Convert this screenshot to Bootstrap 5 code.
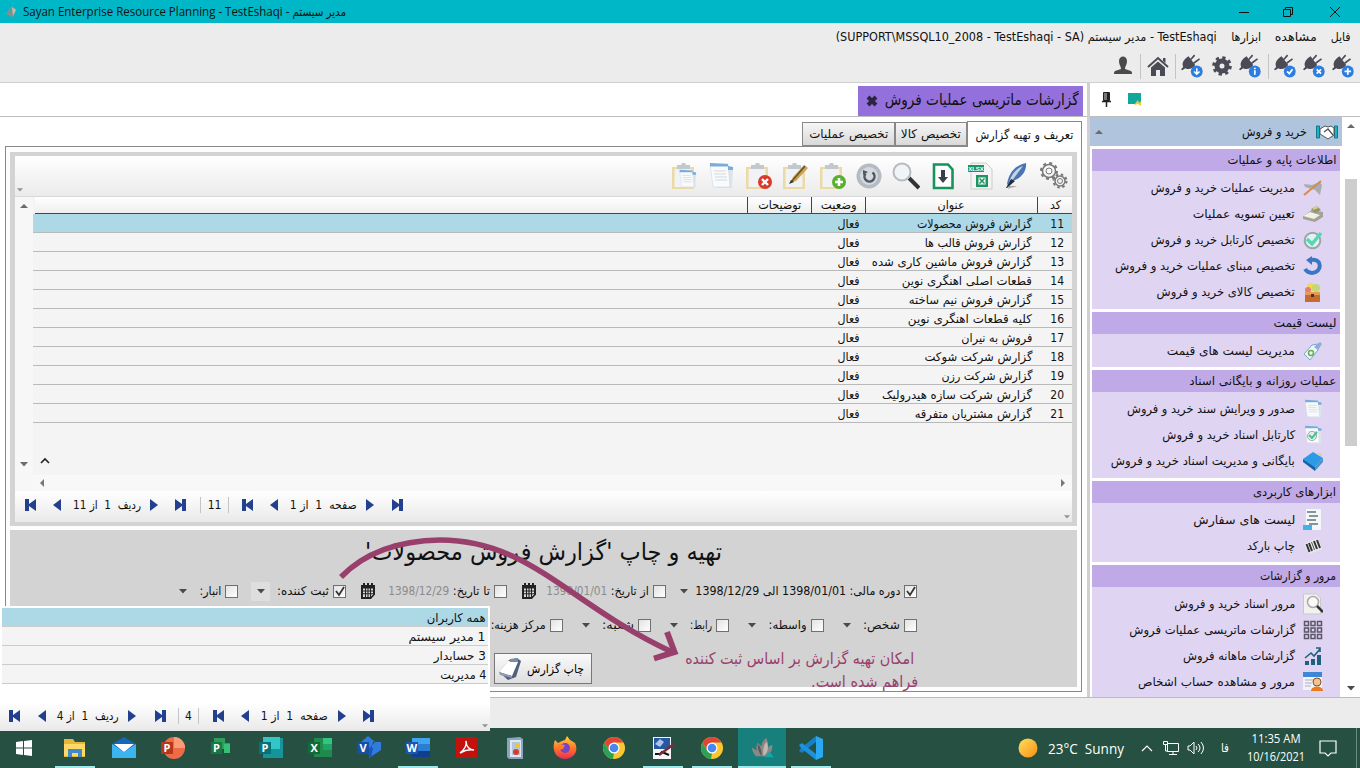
<!DOCTYPE html>
<html lang="fa">
<head>
<meta charset="utf-8">
<title>Sayan Enterprise Resource Planning</title>
<link rel="stylesheet" href="https://cdn.jsdelivr.net/npm/bootstrap@5.3.0/dist/css/bootstrap.min.css">
<style>
body{width:1360px;height:768px;overflow:hidden;font:12px/16px "DejaVu Sans Condensed","DejaVu Sans",sans-serif;color:#111;background:#ececec}
svg{display:block;flex:none}
[data-w]{display:inline-block;white-space:nowrap;flex:none}
.titlebar{height:23px;background:#00b7c7;font-family:"Open Sans","DejaVu Sans Condensed",sans-serif;padding:0 19px 0 4px}
.topmenu{height:60px;background:#ececec;border-bottom:1px solid #cfcfcf}
.menurow{height:28px;padding:0 9px;gap:14px}
.toolrow{height:30px;padding-right:4px;gap:5px}
.vsep{width:1px;height:25px;background:#c4c4c4}
.workarea{height:614px;background:#fff}
.leftpane{width:1087px}
.splitter{width:3px;background:#d0d0d0}
.pagetabs{height:34px;border-bottom:1px solid #bdbdbd;padding:3px 4px 0 0}
.pagetab{width:225px;height:30px;background:#9370db;padding:0 4px 3px;gap:7px}
.innertabs{height:29px;padding:4px 5px 0 0}
.itab{height:24px;border:1px solid #888;background:linear-gradient(#f6f6f6,#d9d9d9)}
.itab.on{height:26px;background:#fff;border-bottom:0;position:relative;margin-bottom:-1px;z-index:1}
.frame{margin-left:5px;width:1077px;height:546px;border:1px solid #888;background:#fdfdfd;padding:5px 4px}
.gridbox{height:374px;border:4px solid #d3d3d3;border-width:4px 5px}
.gtools{height:41px;background:linear-gradient(#fff,#ebebeb);border-bottom:1px solid #d8d8d8;padding:6px 4px 0 0;gap:9px;position:relative}
.gcol{width:18px;background:#f7f7f7;padding:6px 0 8px}
.gmain{background:#f4f4f4}
.grow,.ghead{display:grid;grid-template-columns:35px 172px 54px 64px 1fr;height:19px;border-bottom:1px solid #b9b9b9;align-items:center}
.grow>*{padding:2px 5px 0 0}
.grow>:first-child{padding-right:8px}
.grow.on,.prow.on{background:#add8e6}
.ghead{height:17px;margin-left:2px;background:linear-gradient(#fff,#eee);border-color:#3a4a55}
.ghead>*{text-align:center;height:16px;border-left:1px solid #444}
.ghead>:last-child{border:0}
.hscroll{height:16px;background:#f8f8f8;padding:0 6px}
.pager{display:grid;align-items:center;justify-items:center;background:linear-gradient(#fff,#e9e9e9);position:relative;color:#111;padding-bottom:3px}
.pager-main{height:31px;grid-template-columns:32px 20px 80px 13px 40px 29px 37px 16px 83px 9px 45px}
.pager-pop{height:28px;grid-template-columns:30px 24px 68px 20px 36px 21px 40px 12px 87px 7px 46px}
.pcount{justify-self:stretch;text-align:center;border:solid #c4c4c4;border-width:0 1px}
.cornr{position:absolute;left:2px;bottom:4px;opacity:.55}
.cornr.r{left:auto;right:2px;bottom:3px}
.printbox{height:157px;margin-top:4px;background:#d3d3d3;position:relative}
.ptitle{font-size:24px;line-height:44px;height:44px}
.frow{height:34px;padding-right:160px}
.field{gap:4px;height:20px}
.ck{width:13px;height:13px;border:1px solid #707070;background:linear-gradient(135deg,#e2e2e2,#fff);flex:none}
.frow .tail{margin-right:auto;margin-left:14px}
.frow.two .tail{margin-left:19px}
.frow .tail.pick{width:19px;height:19px;background:#dedede;margin-left:13px}
.muted-date{color:#8b8b8b}
.printbtn{width:98px;height:31px;margin-right:485px;margin-top:11px;border:1px solid #777;background:linear-gradient(#fafafa,#dedede);padding:0 7px 0 2px;border-radius:0}
.note{position:absolute;color:#993f6b;font-size:16px;line-height:23px;left:660px;top:117px;width:248px}
.arrowline{position:absolute;left:320px;top:0;pointer-events:none}
.popup{position:absolute;left:0;top:606px;width:490px;height:125px;background:#fff;padding-top:2px}
.prow{height:19px;margin:0 2px;padding:1px 2px 0;background:#f4f4f4;border-bottom:1px solid #ccc;line-height:19px}
.side{width:270px}
.sidetop{height:34px;border-bottom:1px solid #bdbdbd;padding:0 0 0 9px;gap:14px}
.sidelist{width:252px}
.modhead{height:29px;background:#b0c4de;padding:0 3px 0 5px;margin-bottom:3px}
.grp{margin:0 2px 3px;background:#dfd5f3;padding-bottom:3.5px}
.grp h6{margin:0 0 4px;height:22px;background:#bfaae7;font-size:12px;line-height:22px;padding-right:4px;font-weight:400}
.grp a{height:26px;color:#111;text-decoration:none;padding-right:17px;gap:8px}
.sbar{width:18px;padding:6px 0}
.thumb{width:12px;height:267px;margin:51px auto 0;background:#cdcdcd}
.botbar{height:31px;border-top:1px solid #bbb}
.taskbar{height:40px;background:#265042;color:#fff;font-family:"Open Sans","DejaVu Sans",sans-serif}
.ti{height:40px;width:40px;margin-right:9px}
.ti.run{box-shadow:inset 0 -2px #9fe8ea}
.ti.act{background:#17807c;width:48px;margin-left:-3px;margin-right:5px}
</style>
</head>
<body>
<svg width="0" height="0" class="position-absolute"><defs>
<linearGradient id="gSun" x2="1" y2="1"><stop stop-color="#ffe25a"/><stop offset="1" stop-color="#f98d12"/></linearGradient>
<linearGradient id="gFox" x2="0" y2="1"><stop stop-color="#ffd43a"/><stop offset=".6" stop-color="#ff6a2a"/><stop offset="1" stop-color="#e82a5c"/></linearGradient>
<symbol id="plug" viewBox="0 0 20 22"><path fill="#4b4b55" d="M2 12C0 7 4 4 7 2l6 8c-2 3-6 5-9 3l-3 2-1-1z"/><path d="M9 5l3.500-4M11.500 8.500L17 4.500" stroke="#4b4b55" stroke-width="1.500"/><circle cx="14.500" cy="16" r="5.500" fill="#2a7de1"/></symbol>
<symbol id="tup" viewBox="0 0 8 5"><path d="M0 5l4-4 4 4z" fill="#6b6b6b"/></symbol>
<symbol id="tdn" viewBox="0 0 8 5"><path d="M0 0h8L4 4.500z" fill="#4a4a4a"/></symbol>
<symbol id="nf" viewBox="0 0 12 12"><path fill="#23408f" d="M0 0h4v5l7-5v12l-7-5v5H0z"/></symbol>
<symbol id="np" viewBox="0 0 8 12"><path fill="#23408f" d="M8 0v12L0 6z"/></symbol>
<symbol id="clip" viewBox="0 0 28 28"><path d="M2 5h22v22H2z" fill="#ecd9a4"/><path d="M4.500 7h17v18h-17z" fill="#f0f2f5"/><path d="M7 3h4l1-2h3l1 2h4v4H7z" fill="#c3c8cd"/></symbol>
<symbol id="doc" viewBox="0 0 28 28"><path d="M6 3l20 2-1 21H10z" fill="#dce4eb"/><path d="M3 2h18l2 23H6z" fill="#f8fafb" stroke="#cfd6dc" stroke-width=".6"/><path d="M3 1l18 1v2.500H3zM21 4l5 1v3h-5z" fill="#7babdb"/><path d="M7 9h12M7 12h12M8 15h12M8 18h12" stroke="#d3d8dd"/></symbol>
<symbol id="cal" viewBox="0 0 16 16"><path d="M1 2h14v9.500L11 16H1z" fill="#222"/><path d="M3 5.500h10v6L10.500 14H3z" fill="#ddd"/><path d="M3 8h10M3 10.800h10M5.500 5v9M8 5v9M10.500 5v9" stroke="#222" stroke-width="1.100"/><path d="M4 0v3M8 0v3M12 0v3" stroke="#222" stroke-width="2"/></symbol>
<symbol id="chrome" viewBox="0 0 24 24"><circle cx="12" cy="12" r="11" fill="#fbc72e"/><path d="M2.500 6.500A11 11 0 0 1 21.500 6.500H12L7 14z" fill="#e0453a"/><path d="M2.500 6.500L7.500 15 12 17 11 23A11 11 0 0 1 2.500 6.500z" fill="#2ea150"/><circle cx="12" cy="12" r="5.500" fill="#fff"/><circle cx="12" cy="12" r="4.300" fill="#4787f0"/></symbol>
<symbol id="flower" viewBox="0 0 24 24"><path d="M5 20C2 17 1 13 1 11l5 3c-1-3 0-6 1-8l4 4c0-4 2-7 5-9 2 4 2 7 1 10l5-3c1 4-1 9-5 12z" fill="#8d8784"/><path d="M11 20c-3-4-4-8-4-13 3 3 4 7 4 13z" fill="#5d5856"/><path d="M13 20c-1-6 0-11 3-15 3 5 2 11-3 15z" fill="#c0b9b4"/><path d="M14 21l5-6 5 6z" fill="#14a5ad"/></symbol>
</defs></svg>

<header class="titlebar d-flex align-items-center">
  <svg width="14" height="14" viewBox="0 0 14 14"><path d="M2 9l4-6v8zM7 1l5 3-3 8-3-1z" fill="#8f8b89"/><path d="M8 2l4 3-3 6z" fill="#c9b9ae"/></svg>
  <span dir="ltr" data-w="323" style="margin-left:5px">Sayan Enterprise Resource Planning - TestEshaqi - مدیر سیستم</span>
  <svg class="ms-auto" width="106" height="12" fill="none" stroke="#111"><path d="M4 6.500h10M48.500 3.500h7v7h-7zM50.500 3V1.500h7v7H56M95 1l10 10M105 1L95 11"/></svg>
</header>

<div class="topmenu">
  <nav class="menurow d-flex align-items-center" dir="rtl">
    <span data-w="20">فایل</span><span data-w="42">مشاهده</span><span data-w="30">ابزارها</span>
    <span dir="ltr" data-w="381">(SUPPORT\MSSQL10_2008 - TestEshaqi - SA) مدیر سیستم - TestEshaqi</span>
  </nav>
  <div class="toolrow d-flex align-items-center" dir="rtl">
    <svg width="24" height="24" viewBox="0 0 22 22"><use href="#plug" width="20" height="22"/><path d="M14.500 13v6M11.500 16h6" stroke="#fff" stroke-width="1.600"/></svg>
    <svg width="24" height="24" viewBox="0 0 22 22"><use href="#plug" width="20" height="22"/><path d="M12.500 14l4 4M16.500 14l-4 4" stroke="#fff" stroke-width="1.600"/></svg>
    <svg width="24" height="24" viewBox="0 0 22 22"><use href="#plug" width="20" height="22"/><path d="M12 16l2 2 3-4" stroke="#fff" stroke-width="1.600" fill="none"/></svg>
    <i class="vsep"></i>
    <svg width="24" height="24" viewBox="0 0 22 22"><use href="#plug" width="20" height="22"/><path d="M14.500 12.500v1.500M14.500 15v4" stroke="#fff" stroke-width="1.600"/></svg>
    <svg width="24" height="24" viewBox="-12 -12 24 24"><circle r="5" fill="none" stroke="#4b4b55" stroke-width="5"/><circle r="8.300" fill="none" stroke="#4b4b55" stroke-width="3" stroke-dasharray="3.260 3.259"/></svg>
    <svg width="24" height="24" viewBox="0 0 22 22"><use href="#plug" width="20" height="22"/><path d="M14.500 13v5M12 16l2.500 2.500L17 16" stroke="#fff" stroke-width="1.400" fill="none"/></svg>
    <i class="vsep"></i>
    <svg width="24" height="24" viewBox="0 0 24 24"><path d="M2 13L12 4l10 9" fill="none" stroke="#4b4b55" stroke-width="2"/><path d="M5 13.500L12 7.500l7 6V22h-5v-6h-4v6H5z" fill="#4b4b55"/><path d="M17 4h2.500v5L17 7z" fill="#4b4b55"/></svg>
    <i class="vsep"></i>
    <svg width="24" height="24" viewBox="0 0 24 24"><path fill="#4a4a4a" d="M8 7c0-6 8-6 8 0 0 4-2 5-2 8l6 2c1 1 1 2 1 3H3c0-1 0-2 1-3l6-2c0-3-2-4-2-8z"/></svg>
  </div>
</div>

<main class="workarea d-flex">
  <section class="leftpane">
    <div class="pagetabs" dir="rtl"><div class="pagetab d-flex align-items-center fs-6"><span data-w="194">گزارشات ماتریسی عملیات فروش</span><svg width="12" height="12" viewBox="0 0 12 12" style="margin-top:3px"><path d="M2 2l8 8M10 2l-8 8" stroke="#2c2540" stroke-width="4"/></svg></div></div>
    <div class="innertabs d-flex align-items-end" dir="rtl">
      <div class="itab on d-flex align-items-center justify-content-center" style="width:115px"><span data-w="98">تعریف و تهیه گزارش</span></div>
      <div class="itab d-flex align-items-center justify-content-center" style="width:72px"><span data-w="60">تخصیص کالا</span></div>
      <div class="itab d-flex align-items-center justify-content-center" style="width:93px"><span data-w="79">تخصیص عملیات</span></div>
    </div>
    <div class="frame">
      <div class="gridbox d-flex flex-column">
        <div class="gtools d-flex" dir="rtl">
          <svg width="28" height="28" viewBox="0 0 28 28" fill="none" stroke="#777"><circle cx="9" cy="9" r="3"/><circle cx="9" cy="9" r="6.500" stroke-width="1.500"/><circle cx="9" cy="9" r="8" stroke-width="2" stroke-dasharray="3 3.280"/><circle cx="20" cy="19" r="2.500"/><circle cx="20" cy="19" r="5" stroke-width="1.500"/><circle cx="20" cy="19" r="6.500" stroke-width="2" stroke-dasharray="2.500 2.600"/></svg>
          <svg width="28" height="28" viewBox="0 0 28 28"><path d="M5 27c3-2 6-1 9-3l-8 0z" fill="#aaa"/><path d="M4 23C5 12 12 3 23 1c1 8-5 16-14 18z" fill="#4a74b4"/><path d="M5 24L20 4c-8 3-13 10-15 20z" fill="#c4d3e8"/><path d="M3 26l5-9 4 2-8 7z" fill="#222a3c"/></svg>
          <svg width="28" height="28" viewBox="0 0 28 28"><path d="M5 1h15l6 6v20H5z" fill="#f4f4f4" stroke="#ccc"/><path d="M2 3h16v7H2z" fill="#1e9463"/><text x="10" y="8.700" font-size="6" font-family="Liberation Sans" font-weight="700" fill="#fff" text-anchor="middle">XLSX</text><path d="M10 13h12v12H10z" fill="#1e9463"/><path d="M12.500 15.500h7v7h-7z" fill="#fff"/><path d="M13.500 16.500l5 5M18.500 16.500l-5 5" stroke="#1e9463" stroke-width="1.600"/></svg>
          <svg width="28" height="28" viewBox="0 0 28 28"><path d="M5 2.500h14l4.500 5V26H5z" fill="#fff" stroke="#17935b" stroke-width="2.600"/><path d="M14 8v8" stroke="#3b4048" stroke-width="4"/><path d="M9 15h10l-5 6z" fill="#3b4048"/></svg>
          <svg width="28" height="28" viewBox="0 0 28 28"><path d="M17 16l10 10" stroke="#333" stroke-width="4"/><circle cx="10" cy="10" r="8.500" fill="#f1f4f6" stroke="#b5bbc0" stroke-width="2"/></svg>
          <svg width="28" height="28" viewBox="0 0 28 28"><circle cx="14" cy="14" r="12.500" fill="#b4bbc2"/><circle cx="14" cy="14" r="9" fill="#d5d9dd"/><path d="M10.500 11.500a5 5 0 1 0 7-1" fill="none" stroke="#4f5860" stroke-width="2.500"/><path d="M8 13V8l5 2z" fill="#4f5860"/></svg>
          <svg width="28" height="28"><use href="#clip"/><circle cx="21" cy="20" r="7" fill="#57b030"/><path d="M21 16v8M17 20h8" stroke="#fff" stroke-width="2.600"/></svg>
          <svg width="28" height="28"><use href="#clip"/><path d="M9 21l3-6L23 3l4 3-12 13z" fill="#d0a24a"/><path d="M11 19L24 4" stroke="#5e5232" stroke-width="1.500"/><path d="M8 22l2-4 3 2z" fill="#333"/></svg>
          <svg width="28" height="28"><use href="#clip"/><circle cx="21" cy="20" r="7" fill="#d93a2b"/><path d="M18 17l6 6M24 17l-6 6" stroke="#fff" stroke-width="2.400"/></svg>
          <svg width="28" height="28"><use href="#doc"/></svg>
          <svg width="28" height="28"><use href="#clip"/><use href="#doc" x="7" y="7" width="21" height="20"/></svg>
          <svg class="cornr" width="6" height="4"><use href="#tdn"/></svg>
        </div>
        <div class="d-flex flex-grow-1">
          <div class="gcol d-flex flex-column align-items-center">
            <svg width="8" height="5"><use href="#tup"/></svg>
            <svg width="8" height="5" class="mt-auto" style="margin-bottom:16px;opacity:.8"><use href="#tdn"/></svg>
          </div>
          <div class="gmain flex-grow-1 d-flex flex-column" dir="rtl">
            <div class="ghead"><div><span data-w="11" data-c>کد</span></div><div><span data-w="27" data-c>عنوان</span></div><div><span data-w="36" data-c>وضعیت</span></div><div><span data-w="43" data-c>توضیحات</span></div><div></div></div>
            <div class="grow on"><div>11</div><div><span data-w="115">گزارش فروش محصولات</span></div><div><span data-w="22">فعال</span></div></div>
            <div class="grow"><div>12</div><div><span data-w="107">گزارش فروش قالب ها</span></div><div><span data-w="22">فعال</span></div></div>
            <div class="grow"><div>13</div><div><span data-w="160">گزارش فروش ماشین کاری شده</span></div><div><span data-w="22">فعال</span></div></div>
            <div class="grow"><div>14</div><div><span data-w="130">قطعات اصلی اهنگری نوین</span></div><div><span data-w="22">فعال</span></div></div>
            <div class="grow"><div>15</div><div><span data-w="123">گزارش فروش نیم ساخته</span></div><div><span data-w="22">فعال</span></div></div>
            <div class="grow"><div>16</div><div><span data-w="124">کلیه قطعات اهنگری نوین</span></div><div><span data-w="22">فعال</span></div></div>
            <div class="grow"><div>17</div><div><span data-w="71">فروش به نیران</span></div><div><span data-w="22">فعال</span></div></div>
            <div class="grow"><div>18</div><div><span data-w="108">گزارش شرکت شوکت</span></div><div><span data-w="22">فعال</span></div></div>
            <div class="grow"><div>19</div><div><span data-w="91">گزارش شرکت رزن</span></div><div><span data-w="22">فعال</span></div></div>
            <div class="grow"><div>20</div><div><span data-w="150">گزارش شرکت سازه هیدرولیک</span></div><div><span data-w="22">فعال</span></div></div>
            <div class="grow"><div>21</div><div><span data-w="117">گزارش مشتریان متفرقه</span></div><div><span data-w="22">فعال</span></div></div>
            <div class="mt-auto d-flex justify-content-end pb-2" style="padding-left:7px"><svg width="10" height="10" fill="none" stroke="#222" stroke-width="1.600"><path d="M1 6l4-4 4 4"/></svg></div>
            <div class="hscroll d-flex align-items-center justify-content-between"><svg width="5" height="8"><path d="M0 0v8l4-4z" fill="#777"/></svg><svg width="5" height="8"><path d="M5 0v8L1 4z" fill="#777"/></svg></div>
          </div>
        </div>
        <div class="pager pager-main">
          <svg width="12" height="12"><use href="#nf"/></svg><svg width="8" height="12"><use href="#np"/></svg>
          <span dir="rtl" data-w="68" data-c>ردیف &nbsp;1 &nbsp;از 11</span>
          <svg width="8" height="12"><path fill="#23408f" d="M0 0v12l8-6z"/></svg><svg width="12" height="12"><use href="#nf" transform="matrix(-1 0 0 1 12 0)"/></svg>
          <span class="pcount">11</span>
          <svg width="12" height="12"><use href="#nf"/></svg><svg width="8" height="12"><use href="#np"/></svg>
          <span dir="rtl" data-w="67" data-c>صفحه &nbsp;1 &nbsp;از 1</span>
          <svg width="8" height="12"><path fill="#23408f" d="M0 0v12l8-6z"/></svg><svg width="12" height="12"><use href="#nf" transform="matrix(-1 0 0 1 12 0)"/></svg>
          <svg class="cornr r" width="6" height="4"><use href="#tdn"/></svg>
        </div>
      </div>

      <div class="printbox" dir="rtl">
        <div class="ptitle text-center"><span data-w="357" data-c>تهیه و چاپ 'گزارش فروش محصولات'</span></div>
        <div class="frow d-flex align-items-center">
          <label class="field d-flex align-items-center" style="width:251px"><span class="ck"><svg width="11" height="11"><path d="M2 5l3 4 5-8" fill="none" stroke="#333" stroke-width="1.800"/></svg></span><span data-w="205">دوره مالی: 1398/01/01 الی 1398/12/29</span><svg class="tail" width="8" height="5"><use href="#tdn"/></svg></label>
          <label class="field d-flex align-items-center" style="width:159px"><span class="ck"></span><span data-w="38">از تاریخ:</span><span class="muted-date" data-w="61">1398/01/01</span><svg class="tail" width="16" height="16"><use href="#cal"/></svg></label>
          <label class="field d-flex align-items-center" style="width:161px"><span class="ck"></span><span data-w="37">تا تاریخ:</span><span class="muted-date" data-w="61">1398/12/29</span><svg class="tail" width="16" height="16"><use href="#cal"/></svg></label>
          <label class="field d-flex align-items-center" style="width:108px"><span class="ck"><svg width="11" height="11"><path d="M2 5l3 4 5-8" fill="none" stroke="#333" stroke-width="1.800"/></svg></span><span data-w="52">ثبت کننده:</span><span class="tail pick d-flex align-items-center justify-content-center"><svg width="8" height="5"><use href="#tdn"/></svg></span></label>
          <label class="field d-flex align-items-center" style="width:73px"><span class="ck"></span><span data-w="22">انبار:</span><svg class="tail" width="8" height="5"><use href="#tdn"/></svg></label>
        </div>
        <div class="frow two d-flex align-items-center">
          <label class="field d-flex align-items-center" style="width:93px"><span class="ck"></span><span data-w="37">شخص:</span><svg class="tail" width="8" height="5"><use href="#tdn"/></svg></label>
          <label class="field d-flex align-items-center" style="width:95px"><span class="ck"></span><span data-w="38">واسطه:</span><svg class="tail" width="8" height="5"><use href="#tdn"/></svg></label>
          <label class="field d-flex align-items-center" style="width:78px"><span class="ck"></span><span data-w="22">رابط:</span><svg class="tail" width="8" height="5"><use href="#tdn"/></svg></label>
          <label class="field d-flex align-items-center" style="width:88px"><span class="ck"></span><span data-w="32">شعبه:</span><svg class="tail" width="8" height="5"><use href="#tdn"/></svg></label>
          <label class="field d-flex align-items-center" style="width:90px"><span class="ck"></span><span data-w="55">مرکز هزینه:</span></label>
        </div>
        <button class="printbtn d-flex align-items-center justify-content-between"><span data-w="57">چاپ گزارش</span><svg width="26" height="26" viewBox="0 0 26 26"><path d="M12 4l8-2 4 3-5 16-8 3-9-8z" fill="#50617d"/><path d="M11 5l10 1-6 14-13-4z" fill="#fff"/><path d="M2 16l13 4v2L3 19z" fill="#8e9bb0"/><path d="M13 3l8-1v4l-8 0z" fill="#7e8ba1"/></svg></button>
        <div class="note"><div style="padding-right:4px"><span data-w="229">امکان تهیه گزارش بر اساس ثبت کننده</span></div><div><span data-w="107">فراهم شده است.</span></div></div>
        <svg class="arrowline" width="360" height="150" viewBox="330 530 360 150" fill="none" stroke="#993f6b"><path d="M341 577Q376 541 440 540C530 540 570 605 672 652" stroke-width="5.500"/><path d="M667 632l7.500 20-20.500 6.500" stroke-width="6"/></svg>
      </div>
    </div>
  </section>
  <div class="splitter"></div>
  <aside class="side">
    <div class="sidetop d-flex align-items-center">
      <svg width="14" height="18" viewBox="0 0 14 18"><path d="M4.500 1.500h6v8h-6z" fill="#777" stroke="#222"/><path d="M9 2v8" stroke="#222" stroke-width="2"/><path d="M3 10.500h9M7.500 11v5" stroke="#222" stroke-width="1.500"/></svg>
      <svg width="16" height="15"><path d="M1 1h13v11H1z" fill="#12a79b"/><path d="M7 13l4-5 1 3 2-2v5l-3-2z" fill="#e8cf3c"/></svg>
    </div>
    <div class="d-flex" dir="rtl">
      <div class="sbar d-flex flex-column align-items-center"><svg width="8" height="5"><use href="#tup"/></svg><div class="thumb"></div><svg width="8" height="5" style="margin-top:240px"><use href="#tdn"/></svg></div>
      <div class="sidelist overflow-hidden" style="height:580px">
        <div class="modhead d-flex align-items-center">
          <svg width="24" height="16" viewBox="0 0 24 16"><path d="M1.500 2h3v12h-3zM19.500 2h3v12h-3z" fill="#17b5c5" stroke="#167886"/><path d="M5 5l5-3 3 1 3-1 3 2v7l-6 4-8-5z" fill="#fff" stroke="#555"/><path d="M9 8l4-3 5 6" fill="none" stroke="#555" stroke-width="1.300"/></svg>
          <span data-w="65" style="margin-right:8px">خرید و فروش</span><svg class="me-auto" width="8" height="5"><use href="#tup"/></svg>
        </div>
        <div class="grp"><h6><span data-w="109">اطلاعات پایه و عملیات</span></h6>
          <a class="d-flex align-items-center"><svg width="20" height="20"><path d="M1 6l8 1 8-3 2 3-2 10-5-5-10-3z" fill="#a8adb3"/><path d="M1 17L18 3" stroke="#d98a45" stroke-width="2"/></svg><span data-w="144">مدیریت عملیات خرید و فروش</span></a>
          <a class="d-flex align-items-center"><svg width="20" height="20"><path d="M0 12l9-6 11 2v5l-8 5-12-3z" fill="#a3a296"/><path d="M0 12l7-4 10 3-6 4z" fill="#f2f2e2"/><path d="M8 5l6-3 4 4-6 3z" fill="#8c9480"/><path d="M10 5l5-2" stroke="#e2d05a" stroke-width="2"/></svg><span data-w="102">تعیین تسویه عملیات</span></a>
          <a class="d-flex align-items-center"><svg width="20" height="20" fill="none"><circle cx="9.500" cy="10.500" r="7.800" stroke="#9ba5a8" stroke-width="2" fill="#e8eff2"/><path d="M4 9l5 5L18 3" stroke="#52d8b5" stroke-width="3.500"/></svg><span data-w="144">تخصیص کارتابل خرید و فروش</span></a>
          <a class="d-flex align-items-center"><svg width="20" height="20" fill="none"><path d="M8 4c12-2 11 13 1 13-3 0-5-1-7-4" stroke="#3a76c4" stroke-width="4"/><path d="M9 0v9L3 4z" fill="#3a76c4"/></svg><span data-w="180">تخصیص مبنای عملیات خرید و فروش</span></a>
          <a class="d-flex align-items-center"><svg width="20" height="20"><circle cx="8" cy="5" r="4" fill="#f2d84a"/><circle cx="13" cy="6" r="4" fill="#c2d878"/><circle cx="5" cy="8" r="3" fill="#e77d75"/><path d="M2 10h15v10H2z" fill="#c46d2f"/><path d="M2 10h15v3H2z" fill="#e49a58"/><path d="M8 12h3v3H8z" fill="#5c2b12"/></svg><span data-w="138">تخصیص کالای خرید و فروش</span></a>
        </div>
        <div class="grp"><h6><span data-w="63">لیست قیمت</span></h6>
          <a class="d-flex align-items-center"><svg width="20" height="20"><path d="M1 13L9 4l6-1v6L7 19z" fill="#e9f4fb" stroke="#7ca5cc"/><path d="M11 6l6-5 2 2-4 6z" fill="#8aaed6"/><circle cx="8" cy="12" r="2.500" fill="none" stroke="#6ab04c" stroke-width="1.500"/></svg><span data-w="128">مدیریت لیست های قیمت</span></a>
        </div>
        <div class="grp"><h6><span data-w="147">عملیات روزانه و بایگانی اسناد</span></h6>
          <a class="d-flex align-items-center"><svg width="20" height="20"><use href="#doc"/></svg><span data-w="168">صدور و ویرایش سند خرید و فروش</span></a>
          <a class="d-flex align-items-center"><svg width="20" height="20"><use href="#doc"/><circle cx="9" cy="11" r="4.500" fill="none" stroke="#9aaba6"/><path d="M6 10l3 3 5-6" fill="none" stroke="#3fc48e" stroke-width="2"/></svg><span data-w="133">کارتابل اسناد خرید و فروش</span></a>
          <a class="d-flex align-items-center"><svg width="22" height="20" style="margin:0 -1px"><path d="M1 8l10-7 10 6-8 9z" fill="#2d9ae6"/><path d="M1 8l12 8v4L1 11z" fill="#1563a8"/><path d="M13 16l8-9v4l-8 9z" fill="#4c93c9"/><path d="M15 2l4 0 1 4z" fill="#e6d65c"/></svg><span data-w="184">بایگانی و مدیریت اسناد خرید و فروش</span></a>
        </div>
        <div class="grp"><h6><span data-w="83">ابزارهای کاربردی</span></h6>
          <a class="d-flex align-items-center"><svg width="20" height="22"><path d="M3 0h15v21H3z" fill="#f4f7f8"/><path d="M4 3h9M6 7h9M4 11h9M6 15h9" stroke="#66737c" stroke-width="1.600"/><path d="M0 16h9v5H0z" fill="#45b0e6"/></svg><span data-w="102">لیست های سفارش</span></a>
          <a class="d-flex align-items-center"><svg width="20" height="20"><path d="M1 8l14-6 4 11-13 5z" fill="#e8e8e8"/><path d="M3.500 8l3 8M6 7l3 8M11 5l3 8M14 4l3 8" stroke="#333" stroke-width="2"/><path d="M8.500 6l3 8" stroke="#555"/></svg><span data-w="48">چاپ بارکد</span></a>
        </div>
        <div class="grp"><h6><span data-w="76">مرور و گزارشات</span></h6>
          <a class="d-flex align-items-center"><svg width="20" height="22"><path d="M.5 1h13l4 4v16H.5z" fill="#f1f1ee" stroke="#c9c9c9"/><circle cx="10" cy="9" r="5.500" fill="#fafafa" stroke="#aaa" stroke-width="1.500"/><path d="M14 13l6 6" stroke="#333" stroke-width="2.500"/></svg><span data-w="121">مرور اسناد خرید و فروش</span></a>
          <a class="d-flex align-items-center"><svg width="20" height="20" fill="none" stroke="#5b5668" stroke-width="1.500"><path d="M1.500 1.500h4v4h-4zM8 1.500h4v4H8zM14.500 1.500h4v4h-4zM1.500 8h4v4h-4zM8 8h4v4H8zM14.500 8h4v4h-4zM1.500 14.500h4v4h-4zM8 14.500h4v4H8zM14.500 14.500h4v4h-4z"/></svg><span data-w="166">گزارشات ماتریسی عملیات فروش</span></a>
          <a class="d-flex align-items-center"><svg width="20" height="20"><path d="M2 15h4v4H2zM8 13h4v6H8zM14 9h4v10h-4z" fill="#1f5f80"/><path d="M2 12l6-5 3 3 6-7M13 2h4v4" fill="none" stroke="#1f5f80" stroke-width="1.600"/></svg><span data-w="112">گزارشات ماهانه فروش</span></a>
          <a class="d-flex align-items-center"><svg width="22" height="22" style="margin:0 -1px"><path d="M1 1h19v18H1z" fill="#eef4fb"/><path d="M1 1h19v5H1z" fill="#3f86d6"/><path d="M3 9h8M3 12h7M3 15h6" stroke="#b9a9b5"/><circle cx="15" cy="11" r="4" fill="#f0c491" stroke="#8a4f22"/><path d="M9 20c0-6 12-6 12 0z" fill="#ec7a1e"/></svg><span data-w="157">مرور و مشاهده حساب اشخاص</span></a>
        </div>
      </div>
    </div>
  </aside>
</main>
<div class="botbar"></div>

<footer class="taskbar d-flex align-items-center">
  <div class="ti d-flex align-items-center justify-content-center" style="margin-left:4px;margin-right:11px"><svg width="18" height="18" fill="#fff"><path d="M1 3l7-1v6.500H1zM9 2l8-1v7.500H9zM1 9.500h7V16l-7-1zM9 9.500h8V17l-8-1z"/></svg></div>
  <div class="ti run d-flex align-items-center justify-content-center"><svg width="24" height="24"><path d="M1 3h9l2 3h10v15H1z" fill="#e9b63c"/><path d="M1 8h21v12H1z" fill="#ffd866"/><path d="M5 13h14v8h-4v-4H9v4H5z" fill="#3f8bc9"/></svg></div>
  <div class="ti d-flex align-items-center justify-content-center"><svg width="24" height="24"><path d="M0 8l12-7 12 7v14H0z" fill="#1667b8"/><path d="M0 8l12 8 12-8v14H0z" fill="#3cb4f0"/><path d="M2 8h20l-10 8z" fill="#fff"/></svg></div>
  <div class="ti d-flex align-items-center justify-content-center"><svg width="24" height="24"><circle cx="13" cy="12" r="11" fill="#ed6c47"/><path d="M13 1a11 11 0 0 1 11 11H13z" fill="#ff9a76"/><path d="M0 6h12v12H0z" fill="#b8361b"/><text x="2.500" y="16" font-size="11" font-weight="700" fill="#fff">P</text></svg></div>
  <div class="ti d-flex align-items-center justify-content-center"><svg width="24" height="24"><path d="M4 2h11v5h5v10h-5v-4H4z" fill="#2f9e5b"/><path d="M14 8h6v9h-6z" fill="#35c176"/><path d="M1 6h11v12H1z" fill="#127a42"/><text x="3" y="16" font-size="11" font-weight="700" fill="#fff">P</text></svg></div>
  <div class="ti d-flex align-items-center justify-content-center"><svg width="24" height="24"><path d="M4 2h20v20H4z" fill="#15949b"/><path d="M4 1h17v12H4z" fill="#34c5c9"/><path d="M0 6h12v12H0z" fill="#05727a"/><text x="2.500" y="16" font-size="11" font-weight="700" fill="#fff">P</text></svg></div>
  <div class="ti d-flex align-items-center justify-content-center"><svg width="24" height="24"><path d="M6 2h18v19H6z" fill="#1f8a4d"/><path d="M15 2h9v6h-9z" fill="#33c481"/><path d="M15 8h9v6h-9z" fill="#21a366"/><path d="M0 6h12v12H0z" fill="#0f6b38"/><text x="2.500" y="16" font-size="11" font-weight="700" fill="#fff">X</text></svg></div>
  <div class="ti d-flex align-items-center justify-content-center"><svg width="24" height="24"><path d="M11 0l7 6-7 8-7-8zM12 22l12-8V6h-8z" fill="#2f7be0"/><path d="M6 12h10l-2 10z" fill="#1857b8"/><path d="M0 6h12v12H0z" fill="#174fa8"/><text x="2.500" y="16" font-size="11" font-weight="700" fill="#fff">V</text></svg></div>
  <div class="ti run d-flex align-items-center justify-content-center"><svg width="24" height="24"><path d="M6 2h18v19H6z" fill="#2b7cd3"/><path d="M6 2h18v6H6z" fill="#41a5ee"/><path d="M6 15h18v6H6z" fill="#103f91"/><path d="M0 6h12v12H0z" fill="#1a56b5"/><text x="0.500" y="16" font-size="11" font-weight="700" fill="#fff">W</text></svg></div>
  <div class="ti d-flex align-items-center justify-content-center"><svg width="24" height="24"><path d="M1 1h21v21H1z" fill="#c3110d"/><path d="M5 17c5-4 7-8 6-12 0 6 4 9 8 9-5-1-9 0-14 3z" fill="none" stroke="#fff" stroke-width="1.500"/></svg></div>
  <div class="ti d-flex align-items-center justify-content-center"><svg width="24" height="24"><path d="M3 2l13-1 3 2v20H5l-2-2z" fill="#8ba5c0"/><path d="M6 4h11v17H6z" fill="#dde7f0"/><path d="M8 6h8v13H8z" fill="#b4c7da"/><path d="M11 8h5v4h-5z" fill="#e9c53c"/><circle cx="12" cy="16" r="3" fill="#d33c32"/></svg></div>
  <div class="ti d-flex align-items-center justify-content-center"><svg width="24" height="24"><path d="M2 4l3 3 4-2 3-1 2-4 3 4 5 3c4 8-1 16-10 16S-2 14 2 4z" fill="url(#gFox)"/><circle cx="12" cy="12" r="5" fill="#7545c8"/><path d="M5 8l7 1-2 4-4 1z" fill="#ff7b2d"/></svg></div>
  <div class="ti d-flex align-items-center justify-content-center"><svg width="24" height="24"><use href="#chrome"/></svg></div>
  <div class="ti run d-flex align-items-center justify-content-center"><svg width="24" height="24"><path d="M2 1h18v22H2z" fill="#f3f5f8"/><path d="M3 2h16v11H3z" fill="#2957a4"/><path d="M4 8l5-5 4 3-4 5z" fill="#a9c5ea"/><path d="M4 18h5l2-2 7 3" stroke="#111" stroke-width="2" fill="none"/><path d="M8 19L23 8" stroke="#7a2d35" stroke-width="2.500"/></svg></div>
  <div class="ti run d-flex align-items-center justify-content-center"><svg width="24" height="24"><use href="#chrome"/></svg></div>
  <div class="ti run act d-flex align-items-center justify-content-center"><svg width="23" height="23"><use href="#flower"/></svg></div>
  <div class="ti run d-flex align-items-center justify-content-center"><svg width="24" height="24"><path d="M17 0v6L3 17l-3-2 2-3z" fill="#1580c9"/><path d="M17 24v-6L3 7 0 9l2 3z" fill="#1c91dc"/><path d="M17 0l7 3v18l-7 3z" fill="#2aa8f2"/></svg></div>
  <svg width="20" height="20" style="margin-left:178px"><circle cx="10" cy="10" r="9.500" fill="url(#gSun)"/></svg>
  <span style="margin-left:10px;font-size:14px;padding-top:2px" data-w="76">23°C&nbsp; Sunny</span>
  <svg width="12" height="8" style="margin-left:17px" fill="none" stroke="#fff" stroke-width="1.200"><path d="M1 7l5-5 5 5"/></svg>
  <svg width="17" height="14" style="margin-left:10px" fill="none" stroke="#fff"><path d="M4.500 2.500h11v8h-11zM10 11v2M6 13.500h8M.5.500h4v3h-4zM2.500 3v7H5"/></svg>
  <svg width="18" height="14" style="margin-left:7px" fill="none" stroke="#fff"><path d="M1 5h2l4-4v12L3 9H1zM9 5q2 2 0 4M11 3q4 4 0 8M14 1q5 6 0 12"/></svg>
  <span style="margin-left:16px" data-w="8" dir="ltr">فا</span>
  <div class="text-center" style="margin-left:18px;width:58px;line-height:18px"><span data-w="49" data-c>11:35 AM</span><span data-w="58">10/16/2021</span></div>
  <svg width="18" height="17" style="margin-left:14px" fill="none" stroke="#fff" stroke-width="1.200"><path d="M1 1h16v12h-5l-3 3-3-3H1z"/></svg>
  <i style="margin-left:19px;width:1px;height:40px;background:#6b8a80"></i>
</footer>

<div class="popup" dir="rtl">
  <div class="prow on"><span data-w="59">همه کاربران</span></div>
  <div class="prow"><span data-w="77">1 مدیر سیستم</span></div>
  <div class="prow"><span data-w="52">3 حسابدار</span></div>
  <div class="prow"><span data-w="46">4 مدیریت</span></div>
  <div style="height:19px"></div>
  <div class="pager pager-pop" dir="ltr">
    <svg width="12" height="12"><use href="#nf"/></svg><svg width="8" height="12"><use href="#np"/></svg>
    <span dir="rtl" data-w="62" data-c>ردیف &nbsp;1 &nbsp;از 4</span>
    <svg width="8" height="12"><path fill="#23408f" d="M0 0v12l8-6z"/></svg><svg width="12" height="12"><use href="#nf" transform="matrix(-1 0 0 1 12 0)"/></svg>
    <span class="pcount">4</span>
    <svg width="12" height="12"><use href="#nf"/></svg><svg width="8" height="12"><use href="#np"/></svg>
    <span dir="rtl" data-w="67" data-c>صفحه &nbsp;1 &nbsp;از 1</span>
    <svg width="8" height="12"><path fill="#23408f" d="M0 0v12l8-6z"/></svg><svg width="12" height="12"><use href="#nf" transform="matrix(-1 0 0 1 12 0)"/></svg>
    <svg class="cornr r" width="6" height="4"><use href="#tdn"/></svg>
  </div>
</div>

<script src="https://cdn.jsdelivr.net/npm/bootstrap@5.3.0/dist/js/bootstrap.bundle.min.js"></script>
<script>
// Condense or widen each label to its own measure (data-w, in pixels).
document.querySelectorAll('[data-w]').forEach(function (el) {
  var w = +el.dataset.w, n = el.getBoundingClientRect().width, d = w - n;
  var rtl = getComputedStyle(el.parentElement).direction === 'rtl';
  if ('c' in el.dataset) {
    el.style.transformOrigin = 'center';
    el.style.marginLeft = el.style.marginRight = d / 2 + 'px';
  } else {
    el.style.transformOrigin = rtl ? 'right' : 'left';
    el.style[rtl ? 'marginLeft' : 'marginRight'] = d + 'px';
  }
  el.style.transform = 'scaleX(' + w / n + ')';
});
</script>
</body>
</html>
